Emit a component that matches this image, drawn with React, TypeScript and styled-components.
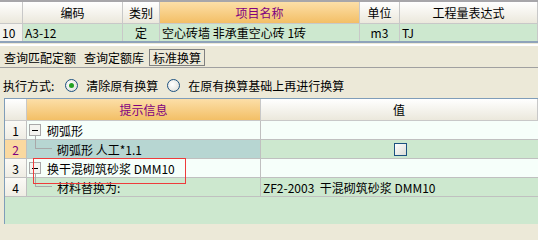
import styled, { createGlobalStyle } from "styled-components";

const GlobalStyle = createGlobalStyle`
  html, body {
    margin: 0;
    padding: 0;
    background: #ece9d8;
  }
  body {
    font-family: "Noto Sans CJK SC", "Liberation Sans", sans-serif;
    font-size: 12px;
    color: #000;
  }
`;

const Page = styled.div`
  width: 538px;
  height: 224px;
  display: flex;
  flex-direction: column;
  overflow: hidden;
`;

const TopGrid = styled.div`
  display: grid;
  grid-template-columns: 23px 100px 37px 200px 40px 1fr;
  border-top: 2px solid #a7a6aa;
  border-bottom: 2px solid #8fa3ba;
`;

const HeadCell = styled.div<{ $hot?: boolean }>`
  height: 22px;
  box-sizing: border-box;
  border-right: 1px solid #c8c8c8;
  border-bottom: 1px solid #c8c8c8;
  display: flex;
  align-items: center;
  justify-content: center;
  background: ${(p) =>
    p.$hot
      ? "linear-gradient(#fcdfa8, #f3bf66)"
      : "linear-gradient(#ffffff, #ebe8dc)"};
  color: ${(p) => (p.$hot ? "#800080" : "#000")};
`;

const DataCell = styled.div<{ $align?: string; $num?: boolean }>`
  height: 17px;
  box-sizing: border-box;
  border-right: 1px solid #c8c8c8;
  display: flex;
  align-items: center;
  justify-content: ${(p) => p.$align || "flex-start"};
  padding: 0 2px;
  white-space: pre;
  background: ${(p) => (p.$num ? "#f4f3ee" : "#cde8cf")};
`;

const Divider = styled.div`
  height: 2px;
  margin-top: 1px;
  background: #ffffff;
`;

const TabBar = styled.div`
  height: 21px;
  display: flex;
  align-items: center;
  gap: 0;
  border-bottom: 1px solid #a0a0a0;
`;

const Tab = styled.div<{ $active?: boolean }>`
  height: 17px;
  box-sizing: border-box;
  display: flex;
  align-items: center;
  margin-top: 2px;
  padding: 0 ${(p) => (p.$active ? "3px" : "3px")};
  margin-left: ${(p) => (p.$active ? "1px" : "0")};
  border: 1px solid ${(p) => (p.$active ? "#808080" : "transparent")};
`;

const Options = styled.div`
  height: 30px;
  box-sizing: border-box;
  padding: 4px 0 0 3px;
  display: flex;
  align-items: center;
`;

const Label = styled.span`
  margin-right: 11px;
`;

const Radio = styled.span<{ $checked?: boolean }>`
  width: 13px;
  height: 13px;
  box-sizing: border-box;
  border-radius: 50%;
  border: 1px solid #1c5180;
  background: radial-gradient(circle at 40% 40%, #ffffff, #dcdcd4);
  display: inline-flex;
  align-items: center;
  justify-content: center;
  margin-right: 8px;
  &::after {
    content: "";
    width: 5px;
    height: 5px;
    border-radius: 50%;
    background: ${(p) => (p.$checked ? "#22a122" : "transparent")};
  }
`;

const Option = styled.label`
  display: flex;
  align-items: center;
  margin-right: 9px;
`;

const LowerGrid = styled.div`
  flex: 1;
  margin-left: 4px;
  border-top: 1px solid #7f9db9;
  border-left: 1px solid #7f9db9;
  background: #cde8cf;
  position: relative;
`;

const Row = styled.div`
  display: grid;
  grid-template-columns: 22px 234px 1fr;
`;

const GridHead = styled(HeadCell)`
  height: 22px;
`;

const NumCell = styled.div<{ $sel?: boolean }>`
  height: 19px;
  box-sizing: border-box;
  border-right: 1px solid #c0c0c0;
  border-bottom: 1px solid #c0c0c0;
  display: flex;
  align-items: center;
  justify-content: center;
  background: ${(p) =>
    p.$sel ? "#fad9a0" : "linear-gradient(#fbfaf6, #efede4)"};
  color: ${(p) => (p.$sel ? "#800080" : "#000")};
`;

const Cell = styled.div<{ $bg: string; $indent?: number; $child?: boolean }>`
  height: 19px;
  box-sizing: border-box;
  border-right: 1px solid #c0c0c0;
  border-bottom: 1px solid #c0c0c0;
  display: flex;
  align-items: center;
  padding-left: ${(p) => p.$indent ?? 2}px;
  background: ${(p) => p.$bg};
  white-space: pre;
  position: relative;
  ${(p) =>
    p.$child &&
    `
    &::before {
      content: "";
      position: absolute;
      left: 8px;
      top: -5px;
      width: 17px;
      height: 14px;
      box-sizing: border-box;
      border-left: 1px solid #a8a8a8;
      border-bottom: 1px solid #a8a8a8;
    }
  `}
`;

const ValueCell = styled(Cell)<{ $center?: boolean }>`
  border-right: none;
  justify-content: ${(p) => (p.$center ? "center" : "flex-start")};
`;

const Toggle = styled.span`
  width: 12px;
  height: 12px;
  box-sizing: border-box;
  border: 1px solid #a8a8a8;
  background: #f4f4f0;
  display: inline-flex;
  align-items: center;
  justify-content: center;
  margin-right: 6px;
  &::after {
    content: "";
    width: 6px;
    height: 1px;
    background: #000;
  }
`;

const CheckBox = styled.span`
  width: 13px;
  height: 13px;
  box-sizing: border-box;
  border: 1px solid #1c5180;
  background: linear-gradient(135deg, #ffffff, #dcdcd7);
`;

const Highlight = styled.div`
  position: absolute;
  left: 28px;
  top: 59px;
  width: 153px;
  height: 26px;
  box-sizing: border-box;
  border: 1px solid #ee3b3b;
  pointer-events: none;
`;

const LIGHT = "#f6fffa";
const GREEN = "#cde8cf";
const SELECTED = "#b7d6d2";

export default function App() {
  return (
    <Page>
      <GlobalStyle />
      <TopGrid>
        <HeadCell />
        <HeadCell>编码</HeadCell>
        <HeadCell>类别</HeadCell>
        <HeadCell $hot>项目名称</HeadCell>
        <HeadCell>单位</HeadCell>
        <HeadCell>工程量表达式</HeadCell>
        <DataCell $num>10</DataCell>
        <DataCell>A3-12</DataCell>
        <DataCell $align="center">定</DataCell>
        <DataCell>空心砖墙 非承重空心砖 1砖</DataCell>
        <DataCell $align="center">m3</DataCell>
        <DataCell>TJ</DataCell>
      </TopGrid>
      <Divider />
      <TabBar>
        <Tab>查询匹配定额</Tab>
        <Tab>查询定额库</Tab>
        <Tab $active>标准换算</Tab>
      </TabBar>
      <Options>
        <Label>执行方式:</Label>
        <Option>
          <Radio $checked />
          清除原有换算
        </Option>
        <Option>
          <Radio />
          在原有换算基础上再进行换算
        </Option>
      </Options>
      <LowerGrid>
        <Row>
          <GridHead />
          <GridHead $hot>提示信息</GridHead>
          <GridHead>值</GridHead>
        </Row>
        <Row>
          <NumCell>1</NumCell>
          <Cell $bg={LIGHT}>
            <Toggle />
            砌弧形
          </Cell>
          <ValueCell $bg={LIGHT} />
        </Row>
        <Row>
          <NumCell $sel>2</NumCell>
          <Cell $bg={SELECTED} $indent={30} $child>
            砌弧形 人工*1.1
          </Cell>
          <ValueCell $bg={GREEN} $center>
            <CheckBox />
          </ValueCell>
        </Row>
        <Row>
          <NumCell>3</NumCell>
          <Cell $bg={LIGHT}>
            <Toggle />
            换干混砌筑砂浆 DMM10
          </Cell>
          <ValueCell $bg={LIGHT} />
        </Row>
        <Row>
          <NumCell>4</NumCell>
          <Cell $bg={GREEN} $indent={30} $child>
            材料替换为:
          </Cell>
          <ValueCell $bg={GREEN}>ZF2-2003  干混砌筑砂浆 DMM10</ValueCell>
        </Row>
        <Highlight />
      </LowerGrid>
    </Page>
  );
}
